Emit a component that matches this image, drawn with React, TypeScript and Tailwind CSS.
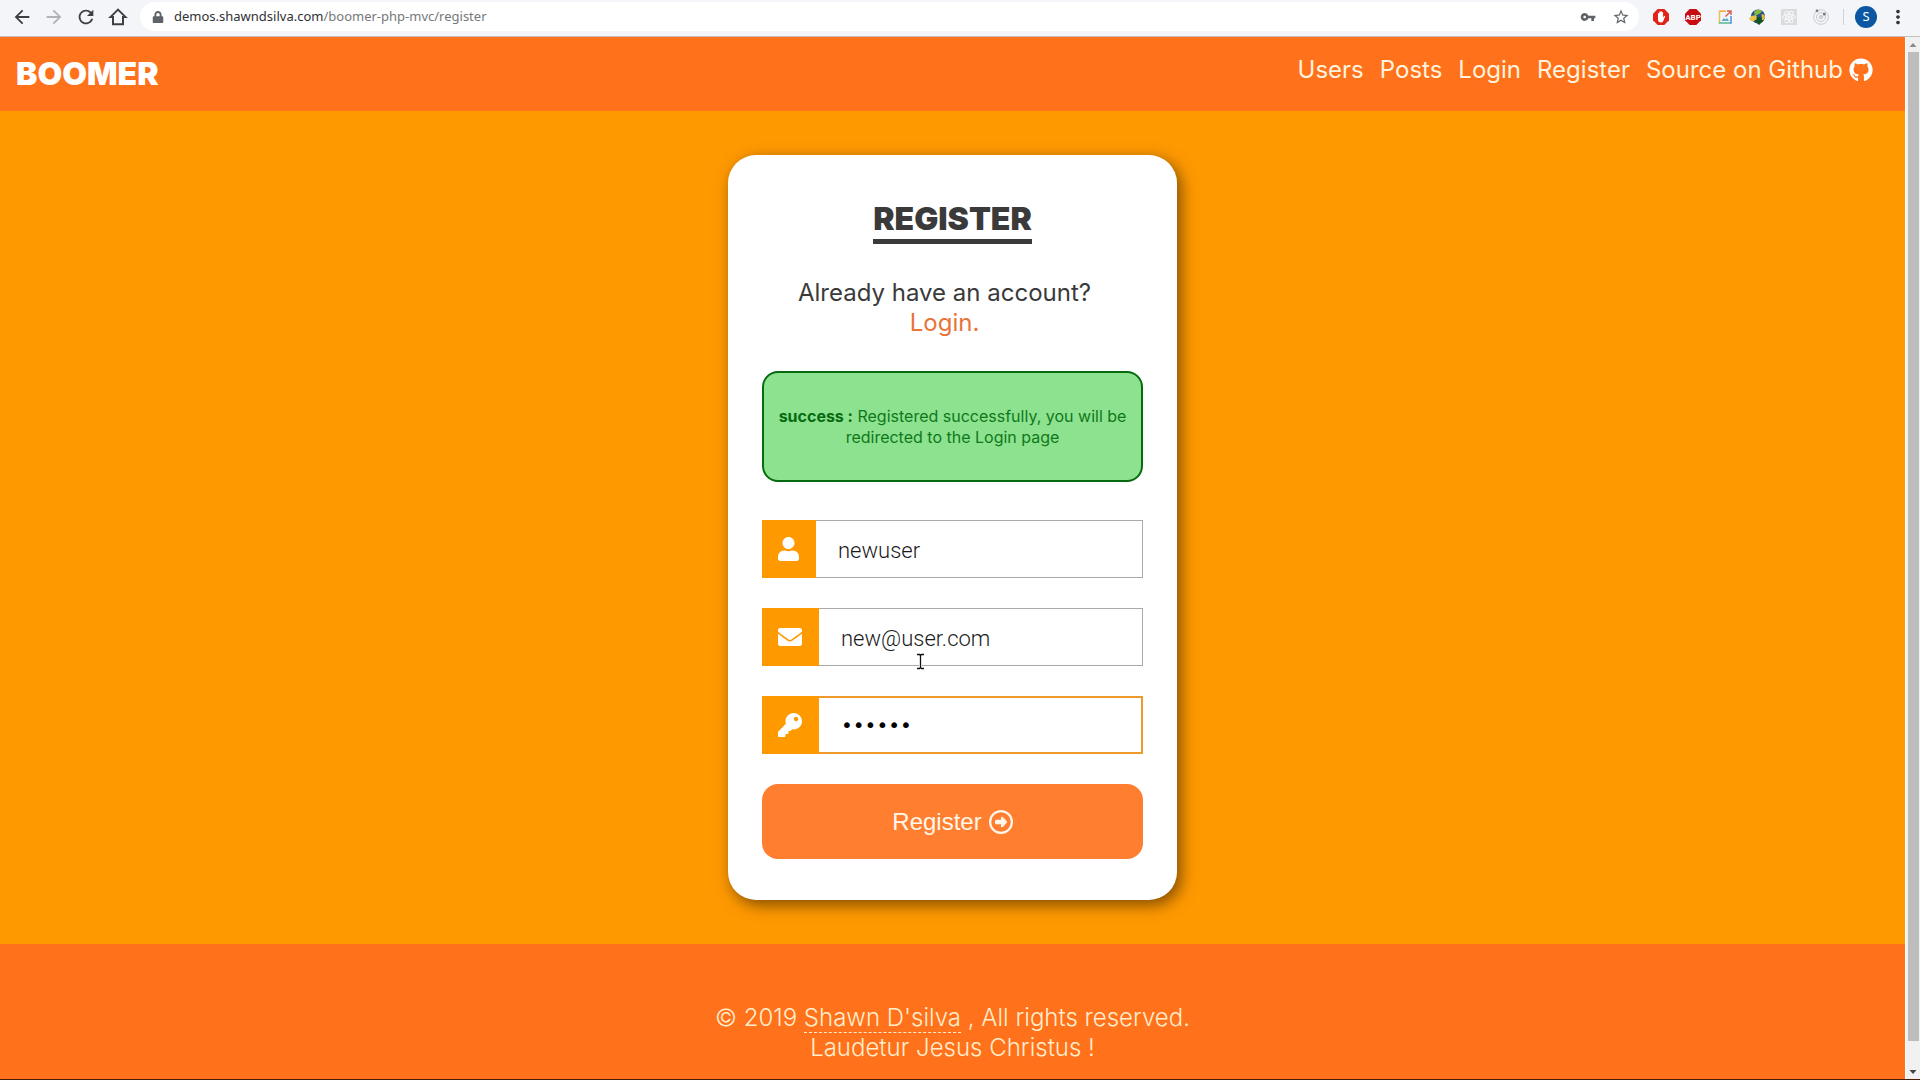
import clsx from "clsx";
import React, { useState } from "react";
import { FaEnvelope, FaGithub, FaKey, FaLock, FaUser } from "react-icons/fa";
import { FaRegCircleRight } from "react-icons/fa6";
import {
  MdArrowBack,
  MdArrowForward,
  MdMoreVert,
  MdRefresh,
  MdStarBorder,
  MdVpnKey,
} from "react-icons/md";

const links = [
  { id: 1, path: "#users", name: "Users" },
  { id: 2, path: "#posts", name: "Posts" },
  { id: 3, path: "#login", name: "Login" },
  { id: 4, path: "#register", name: "Register" },
];

const HomeIcon = () => (
  <svg viewBox="0 0 22 22" className="size-[22px]" fill="none">
    <path
      d="M11 3.6 3.6 10.9H6V18.2H16V10.9H18.4Z"
      stroke="currentColor"
      strokeWidth="2"
    />
  </svg>
);

const HandIcon = () => (
  <svg viewBox="0 0 16 16" className="size-4">
    <path d="M4.7 0h6.6L16 4.7v6.6L11.3 16H4.7L0 11.3V4.7Z" fill="#e2231a" />
    <path
      d="M5 8.6V4.4q.6-.9 1.2 0V3q.7-.9 1.3 0v-.5q.7-.8 1.3 0v.9q.7-.8 1.3 0v5l1-1.400q.9-.5 1.100.3L10.300 12q-.8 1.500-2.400 1.500Q5 13.300 5 10.500Z"
      fill="#fff"
    />
  </svg>
);

const AbpIcon = () => (
  <svg viewBox="0 0 16 16" className="size-4">
    <path d="M4.7 0h6.6L16 4.7v6.6L11.3 16H4.7L0 11.3V4.7Z" fill="#c70d12" />
    <text
      x="8"
      y="11"
      textAnchor="middle"
      fontSize="8"
      fontWeight="700"
      fontFamily="Roboto, sans-serif"
      fill="#fff"
    >
      ABP
    </text>
  </svg>
);

const PictureIcon = () => (
  <svg viewBox="0 0 16 16" className="size-4" fill="none" strokeWidth="1.5">
    <path d="M9 2.2H2.5" stroke="#f2a33a" />
    <path d="M2.5 1.5V14" stroke="#eec04b" />
    <path d="M1.8 14H14" stroke="#57b894" />
    <path d="M14 14.7V7" stroke="#4a90d9" />
    <path d="M8.5 7.5 13.5 2.5M10 2h4v4" stroke="#d9605a" />
    <path d="m4.5 12 2.5-3 1.5 1.5L10 9l2 3Z" fill="#5aa9c8" />
  </svg>
);

const GlobeIcon = () => (
  <svg viewBox="0 0 18 16" className="h-4 w-[18px]">
    <circle cx="10" cy="7.5" r="7" fill="#24508c" />
    <path d="M6 2.5q4-3 8-.5-1 3-4 3.500L7 7Z" fill="#86b83b" />
    <path d="M13.500 5q3.500 0 3.500 3-1 3-3 4Z" fill="#e6b93c" />
    <path d="M1 9.500q3-4 7-3l2 3-4 3q-4 0-5-3Z" fill="#e8c34a" />
    <path d="M8.500 8h5v3h2.500L11 16 6 11h2.500Z" fill="#14521f" />
  </svg>
);

const AtomIcon = () => (
  <svg viewBox="0 0 16 16" className="size-4">
    <rect width="16" height="16" fill="#d9dbdd" />
    <g fill="none" stroke="#f8f9fa">
      <ellipse cx="8" cy="8" rx="6.5" ry="2.5" />
      <ellipse cx="8" cy="8" rx="6.5" ry="2.5" transform="rotate(60 8 8)" />
      <ellipse cx="8" cy="8" rx="6.5" ry="2.5" transform="rotate(120 8 8)" />
    </g>
    <circle cx="8" cy="8" r="1.3" fill="#f8f9fa" />
  </svg>
);

const OrbitIcon = () => (
  <svg viewBox="0 0 16 16" className="size-4" fill="none" stroke="#c9cbce">
    <circle cx="8" cy="8" r="7.3" />
    <circle cx="8" cy="8" r="4.5" />
    <circle cx="8" cy="8" r="2.3" fill="#cfd1d3" stroke="none" />
    <circle cx="4" cy="1.8" r="1.4" fill="#77797c" stroke="none" />
    <circle cx="11.3" cy="5" r="1.5" fill="#77797c" stroke="none" />
  </svg>
);

const extensions = [
  { id: 1, name: "AdBlock", icon: <HandIcon /> },
  { id: 2, name: "Adblock Plus", icon: <AbpIcon /> },
  { id: 3, name: "Screenshot", icon: <PictureIcon /> },
  { id: 4, name: "Downloads", icon: <GlobeIcon /> },
  { id: 5, name: "React", icon: <AtomIcon /> },
  { id: 6, name: "Orbit", icon: <OrbitIcon /> },
];

const Toolbar = () => {
  const [openUrl, setOpenUrl] = useState(false);

  return (
    <div className="h-[37px] bg-[#f3f5f8] border-b border-[#c3bfc0] pt-[2px]">
      <div className="flex items-center h-[29px] pl-[11px] font-['Noto_Sans',sans-serif]">
        <div className="flex items-center gap-[10px] text-[22px] text-[#3c4043]">
          <button title="Back">
            <MdArrowBack />
          </button>
          <button title="Forward" className="text-[#b0b2b5]">
            <MdArrowForward />
          </button>
          <button title="Reload">
            <MdRefresh />
          </button>
          <button title="Home">
            <HomeIcon />
          </button>
        </div>

        {/* Address bar */}
        <div
          className={clsx(
            "flex flex-1 items-center h-full ml-[11px] pl-3 pr-[9px] rounded-full bg-white text-[#5f6368]",
            openUrl && "ring-2 ring-blue-500"
          )}
        >
          <FaLock className="size-3" />
          <button
            title="Address"
            className="flex-1 pl-[10px] text-left text-[13px] text-[#75787b]"
            onClick={() => setOpenUrl(!openUrl)}
          >
            <span className="text-[#303134]">demos.shawndsilva.com</span>
            /boomer-php-mvc/register
          </button>
          <div className="flex items-center gap-4">
            <button title="Saved passwords">
              <MdVpnKey className="size-4" />
            </button>
            <button title="Bookmark this page">
              <MdStarBorder className="size-[18px]" />
            </button>
          </div>
        </div>

        <div className="flex items-center gap-4 pl-[14px]">
          {extensions.map((elm) => (
            <button
              key={elm.id}
              title={elm.name}
              className="flex w-4 justify-center"
            >
              <span className="shrink-0">{elm.icon}</span>
            </button>
          ))}
        </div>
        <div className="w-px h-4 ml-[14px] mr-[11px] bg-[#cfd1d5]"></div>
        <button
          title="Profile"
          className="size-[22px] rounded-full bg-[#0b57a4] text-[13px] text-white"
        >
          S
        </button>
        <button
          title="Menu"
          className="pl-[10px] pr-[11px] text-[22px] text-[#303134]"
        >
          <MdMoreVert />
        </button>
      </div>
    </div>
  );
};

const Header = () => {
  return (
    <header className="bg-[#ff711a]">
      <nav className="flex items-center justify-between h-[74px] pl-4 pr-8">
        <a href="#home" className="text-[32px] font-black text-white">
          BOOMER
        </a>
        <ul className="flex items-center gap-4 pb-2 text-2xl text-[#fff3de]">
          {links.map((elm) => (
            <li key={elm.id}>
              <a href={elm.path}>{elm.name}</a>
            </li>
          ))}
          <li>
            <a href="#github" className="flex items-center gap-1.5">
              Source on Github
              <FaGithub className="text-white" />
            </a>
          </li>
        </ul>
      </nav>
    </header>
  );
};

const fieldStyle =
  "flex-1 min-w-0 h-full pt-[2px] pl-[22px] border border-l-0 border-[#aaaaaa] bg-white font-['Roboto'] text-[22px] font-light text-[#1a1a1a] outline-none";

const labelStyle =
  "flex items-center h-full pl-4 pr-[17px] bg-[#ff9900] text-2xl text-white";

const RegisterForm = () => {
  const [name, setName] = useState("newuser");
  const [email, setEmail] = useState("new@user.com");
  const [password, setPassword] = useState("secret");

  return (
    <form
      className="flex flex-col gap-[30px] mt-[38px]"
      onSubmit={(e) => e.preventDefault()}
    >
      <div className="flex h-[58px]">
        <label htmlFor="name" title="Username" className={labelStyle}>
          <FaUser className="w-[21px]" />
        </label>
        <input
          id="name"
          type="text"
          className={fieldStyle}
          value={name}
          onChange={(e) => setName(e.target.value)}
        />
      </div>

      <div className="relative flex h-[58px]">
        <label htmlFor="email" title="Email" className={labelStyle}>
          <FaEnvelope />
        </label>
        <input
          id="email"
          type="text"
          className={fieldStyle}
          value={email}
          onChange={(e) => setEmail(e.target.value)}
        />
        {/* Text cursor */}
        <svg
          viewBox="0 0 9 17"
          className="absolute left-[154px] top-[45px] w-[9px] h-[17px]"
          fill="none"
        >
          <path
            d="M1 1.5h2.5l1 1 1-1H8M4.5 2v13M1 15.5h2.5l1-1 1 1H8"
            stroke="#fff"
            strokeWidth="3"
          />
          <path
            d="M1 1.5h2.5l1 1 1-1H8M4.5 2v13M1 15.5h2.5l1-1 1 1H8"
            stroke="#111"
            strokeWidth="1.3"
          />
        </svg>
      </div>

      <div className="flex h-[58px]">
        <label htmlFor="password" title="Password" className={labelStyle}>
          <FaKey />
        </label>
        <input
          id="password"
          type="password"
          className="flex-1 min-w-0 h-full pl-[22px] border-2 border-l-0 border-[#ef9a2c] bg-white font-['DejaVu_Sans'] text-xl text-black outline-none"
          value={password}
          onChange={(e) => setPassword(e.target.value)}
        />
      </div>

      <button
        type="submit"
        className="flex items-center justify-center gap-[7px] h-[75px] rounded-2xl bg-[#ff7e30] font-['Liberation_Sans'] text-2xl text-[#fff8ea]"
      >
        Register
        <FaRegCircleRight />
      </button>
    </form>
  );
};

const App = () => {
  return (
    <div className="flex flex-col min-h-screen border-b border-[#4a1c08]">
      <Toolbar />

      <div className="flex flex-1">
        <div className="flex flex-col flex-1 bg-[#ff9900] font-['Inter',sans-serif]">
          <Header />

          <main className="flex-1 py-11">
            <section className="w-full max-w-[449px] m-auto pt-[43px] pb-[41px] px-[34px] rounded-[28px] bg-white text-center text-[#3a3a3a] shadow-[4px_5px_16px_rgba(0,0,0,0.5)]">
              <h1 className="w-fit mx-auto border-b-[5px] border-[#3a3a3a] text-[32px] leading-[41px] font-black">
                REGISTER
              </h1>
              <p className="mt-[34px] pr-4 text-2xl leading-[30px]">
                Already have an account?
                <br />
                <a href="#login" className="text-[#e8743a]">
                  Login.
                </a>
              </p>

              {/* Status message */}
              <div
                role="status"
                className="flex items-center h-[111px] mt-[33px] px-3 border-2 border-[#066b10] rounded-2xl bg-[#8ce28f] leading-[21px] text-[#10781a]"
              >
                <p className="flex-1">
                  <b className="font-bold text-[#066b10]">success :</b>{" "}
                  Registered successfully, you will be redirected to the Login
                  page
                </p>
              </div>

              <RegisterForm />
            </section>
          </main>

          <footer className="pt-[59px] pb-4 bg-[#ff711a] text-center text-2xl leading-[30px] font-light text-[#ffedcc]">
            <p>
              © 2019{" "}
              <a href="#author" className="border-b border-dashed">
                Shawn D'silva
              </a>{" "}
              , All rights reserved.
            </p>
            <p>Laudetur Jesus Christus !</p>
          </footer>
        </div>

        {/* Scrollbar */}
        <div className="flex flex-col items-center w-[15px] border-l border-white bg-[#f1f1f1]">
          <svg viewBox="0 0 14 15" className="h-[15px] w-[14px]">
            <path d="M3.5 10h7L7 6Z" fill="#8a8a8a" />
          </svg>
          <div className="flex-1 w-[11px] bg-[#bdbdbd]"></div>
          <svg viewBox="0 0 14 38" className="h-[38px] w-[14px]">
            <path d="M3.5 29h7L7 33Z" fill="#444444" />
          </svg>
        </div>
      </div>
    </div>
  );
};

export default App;
